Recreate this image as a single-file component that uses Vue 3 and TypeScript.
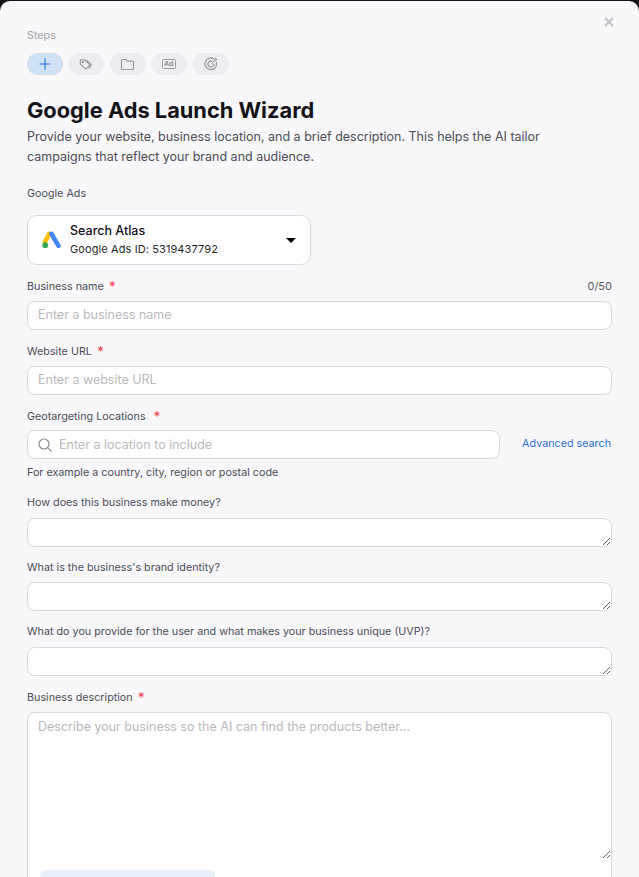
<script setup lang="ts">
const steps = ['plus', 'tag', 'folder', 'ad', 'target'];
</script>

<template>
  <div class="modal">
    <button class="close" aria-label="Close">
      <svg width="12" height="12" viewBox="0 0 12 12"><path d="M2 2l8 8M10 2l-8 8" stroke="#c4c4c8" stroke-width="2.4" fill="none" /></svg>
    </button>
    <div class="steps-label">Steps</div>
    <div class="steps">
      <div v-for="(s, i) in steps" :key="s" class="step" :class="{ active: i === 0 }">
        <svg v-if="s === 'plus'" width="14" height="14" viewBox="0 0 14 14"><path d="M7 1.5v11M1.5 7h11" stroke="#2d6fd9" stroke-width="1.2" fill="none" /></svg>
        <svg v-else-if="s === 'tag'" width="14" height="14" viewBox="0 0 16 16" fill="none" stroke="#9a9aa2" stroke-width="1.3"><path d="M1.5 3.2h5l5.2 5.2a1 1 0 0 1 0 1.4l-3.4 3.4a1 1 0 0 1-1.4 0L1.5 8z" stroke-linejoin="round" /><path d="M8.4 3.2l5.4 5.4a1 1 0 0 1 0 1.4l-3 3" /><circle cx="4.4" cy="5.8" r=".8" /></svg>
        <svg v-else-if="s === 'folder'" width="15" height="15" viewBox="0 0 15 15" fill="none" stroke="#9a9aa2" stroke-width="1.2"><path d="M1.5 3.5a1 1 0 0 1 1-1h3.3l1.5 1.7h5.2a1 1 0 0 1 1 1v6.3a1 1 0 0 1-1 1h-10a1 1 0 0 1-1-1z" stroke-linejoin="round" /></svg>
        <svg v-else-if="s === 'ad'" width="14" height="10" viewBox="0 0 14 10" fill="none"><rect x=".5" y=".5" width="13" height="9" rx="1" stroke="#9a9aa2" /><text x="7" y="7.2" text-anchor="middle" class="ad-text">Ad</text></svg>
        <svg v-else width="14" height="14" viewBox="0 0 15 15" fill="none" stroke="#9a9aa2" stroke-width="1.4"><path d="M10.5 2a6.2 6.2 0 1 0 2.6 3.2" /><path d="M8.8 4.6a3.2 3.2 0 1 0 1.7 2" /><path d="M7.5 7.5l3.5-3.5M11 4V2.2L12.6 1v1.6h1.5L12.8 4z" stroke-width="1" /></svg>
      </div>
    </div>

    <h1 class="title">Google Ads Launch Wizard</h1>
    <p class="desc">Provide your website, business location, and a brief description. This helps the AI tailor campaigns that reflect your brand and audience.</p>

    <div class="label ads-label">Google Ads</div>
    <div class="account">
      <svg class="ads-logo" width="20" height="18" viewBox="0 0 20 18">
        <path d="M7.2 2.8L3 11" stroke="#fbbc04" stroke-width="4.6" stroke-linecap="round" fill="none" />
        <path d="M9.5 2.8l7 12" stroke="#4285f4" stroke-width="4.6" stroke-linecap="round" fill="none" />
        <circle cx="3.2" cy="14.2" r="2.9" fill="#34a853" />
      </svg>
      <div class="account-text">
        <div class="account-name">Search Atlas</div>
        <div class="account-id">Google Ads ID: 5319437792</div>
      </div>
      <span class="caret"></span>
    </div>

    <div class="label-row name-row">
      <label class="label">Business name<span class="req">*</span></label>
      <span class="count">0/50</span>
    </div>
    <input class="field" placeholder="Enter a business name" />

    <label class="label url-label">Website URL<span class="req short">*</span></label>
    <input class="field" placeholder="Enter a website URL" />

    <label class="label geo-label">Geotargeting Locations<span class="req wide">*</span></label>
    <div class="geo-row">
      <div class="search">
        <svg width="16" height="16" viewBox="0 0 16 16" fill="none" stroke="#8c8c92" stroke-width="1.2"><circle cx="7" cy="7" r="5" /><path d="M10.7 10.7l3.8 3.8" /></svg>
        <input placeholder="Enter a location to include" />
      </div>
      <a class="adv">Advanced search</a>
    </div>
    <div class="help">For example a country, city, region or postal code</div>

    <label class="label q1">How does this business make money?</label>
    <textarea class="area"></textarea>
    <label class="label q2">What is the business's brand identity?</label>
    <textarea class="area"></textarea>
    <label class="label q2">What do you provide for the user and what makes your business unique (UVP)?</label>
    <textarea class="area"></textarea>

    <label class="label q4">Business description<span class="req">*</span></label>
    <div class="desc-box">
      <textarea placeholder="Describe your business so the AI can find the products better..."></textarea>
      <div class="gen"></div>
    </div>
  </div>
</template>

<style>
html, body { margin: 0; background: #14151c; height: 100%; overflow: hidden; }
</style>

<style scoped>
.modal {
  position: relative;
  box-sizing: border-box;
  margin-top: 1px;
  height: 876px;
  overflow: hidden;
  padding: 27px 27px 0;
  background: #f8f8fb;
  border-radius: 10px 10px 0 0;
  font-family: Inter, "Liberation Sans", sans-serif;
  color: #4b4c55;
}
.close { position: absolute; top: 15px; right: 24px; padding: 0; border: 0; background: none; line-height: 0; }
.steps-label { font-size: 10.75px; line-height: 16px; color: #a3a3a8; }
.steps { display: flex; gap: 5.4px; margin-top: 9px; }
.step { width: 36px; height: 22px; border-radius: 11px; background: #ececf1; display: flex; align-items: center; justify-content: center; }
.step.active { background: #cfdff4; }
.ad-text { font-family: Inter, "Liberation Sans", sans-serif; font-size: 6.5px; font-weight: 700; fill: #8c8c92; letter-spacing: .3px; }
.title { margin: 20px 0 0; font-size: 21.8px; line-height: 30px; font-weight: 700; color: #121217; }
.desc { margin: 2px 0 0; font-size: 12.5px; line-height: 20px; color: #4b4c55; max-width: 530px; }
.label { display: block; font-size: 10.75px; line-height: 18px; margin-bottom: -2px; color: #4b4c55; }
.ads-label { margin-top: 18px; }
.account {
  box-sizing: border-box; width: 284px; height: 50px; margin-top: 14px; padding: 0 14px 0 14px;
  display: flex; align-items: center; background: #fff; border: 1px solid #d9d9dd; border-radius: 10px;
}
.ads-logo { flex: none; }
.account-text { margin-left: 8px; flex: 1; }
.account-name { font-size: 12.5px; line-height: 18px; font-weight: 500; color: #121217; }
.account-id { font-size: 11px; line-height: 18px; letter-spacing: .1px; color: #26272c; }
.caret { width: 0; height: 0; border-left: 5px solid transparent; border-right: 5px solid transparent; border-top: 5.5px solid #000; }
.label-row { display: flex; justify-content: space-between; align-items: center; height: 16px; }
.name-row { margin-top: 13px; }
.count { font-size: 11px; color: #55565e; }
.req { margin-left: 5px; color: #f0424f; font-size: 14px; line-height: 14px; vertical-align: -2px; }
.req.short { margin-left: 5px; }
.req.wide { margin-left: 8px; }
.field, .search {
  box-sizing: border-box; width: 100%; height: 29px; background: #fff; border: 1px solid #d9d9dd; border-radius: 8px;
  font: inherit; font-size: 12.5px; outline: none;
}
.field { display: block; margin-top: 7px; padding: 0 10px 2px; }
input::placeholder, textarea::placeholder { color: #b9b9bd; opacity: 1; }
.url-label { margin-top: 13px; }
.geo-label { margin-top: 13px; }
.geo-row { display: flex; align-items: center; justify-content: space-between; margin-top: 6px; }
.search { width: 473px; display: flex; align-items: center; gap: 6px; padding: 0 9px; }
.search svg { flex: none; }
.search input { flex: 1; min-width: 0; border: 0; outline: 0; padding: 0; background: none; font: inherit; }
.adv { margin-right: 1px; margin-bottom: 2px; font-size: 10.75px; color: #2d6fd9; }
.help { margin-top: 6px; font-size: 10.75px; line-height: 15px; color: #4b4c55; }
.q1 { margin-top: 14px; }
.q2 { margin-top: 12px; }
.area {
  display: block; box-sizing: border-box; width: 100%; height: 29px; margin: 7.5px 0 0; padding: 4px 10px;
  background: #fff; border: 1px solid #d9d9dd; border-radius: 8px; font: inherit; font-size: 12.5px; outline: none;
}
.q4 { margin-top: 13px; }
.desc-box { box-sizing: border-box; height: 240px; margin-top: 7px; background: #fff; border: 1px solid #d9d9dd; border-radius: 8px; }
.desc-box textarea {
  display: block; box-sizing: border-box; width: 100%; height: 146px; padding: 6px 10px; margin: 0;
  background: transparent; border: 0; outline: none; font: inherit; font-size: 12.5px; line-height: 16px;
}
.gen { width: 175px; height: 32px; margin: 11px 0 0 12px; background: #e8eff9; border-radius: 6px; }
</style>
